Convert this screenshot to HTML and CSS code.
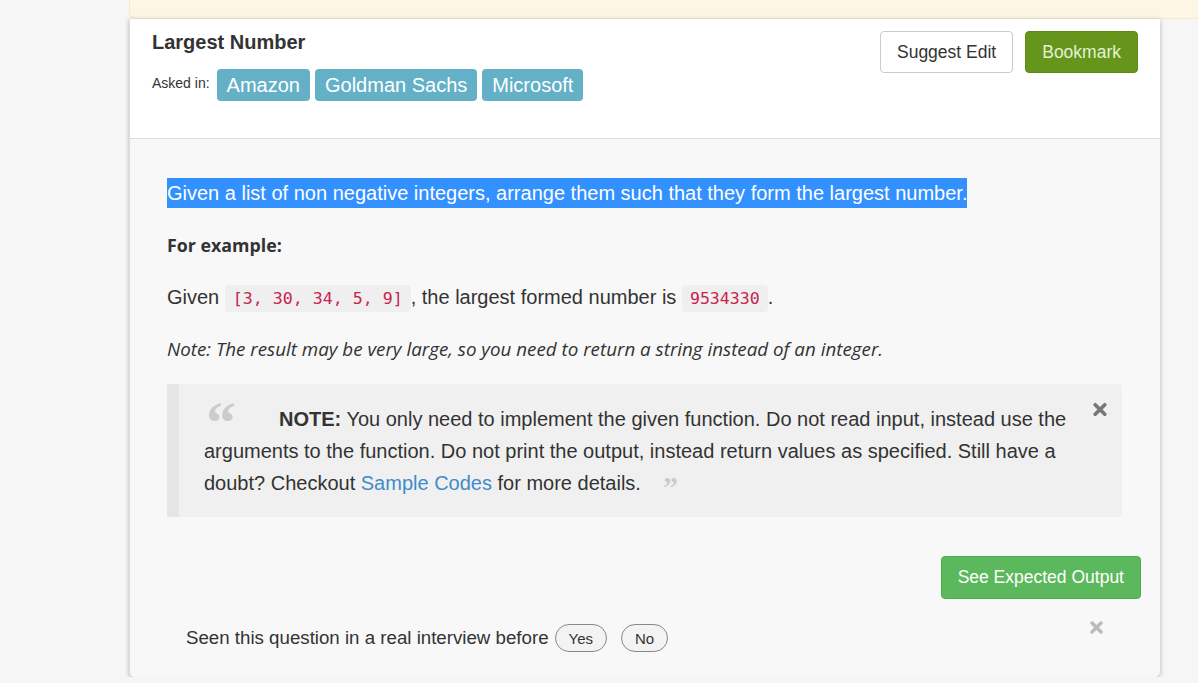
FILE: index.html
```html
<!DOCTYPE html>
<html lang="en">
<head>
<meta charset="utf-8">
<title>Largest Number</title>
<link rel="stylesheet" href="styles.css">
</head>
<body>
<div class="page">
  <div class="notice"></div>
  <div class="card">
    <div class="card-header">
      <div class="head-left">
        <h1 class="title">Largest Number</h1>
        <div class="asked">
          <span class="asked-label">Asked in:</span>
          <span class="tag">Amazon</span>
          <span class="tag">Goldman Sachs</span>
          <span class="tag">Microsoft</span>
        </div>
      </div>
      <div class="head-actions">
        <button class="btn btn-outline">Suggest Edit</button>
        <button class="btn btn-bookmark">Bookmark</button>
      </div>
    </div>
    <div class="card-body">
      <p class="para"><span class="selected">Given a list of non negative integers, arrange them such that they form the largest number.</span></p>
      <p class="para alt"><strong>For example:</strong></p>
      <p class="para">Given <code class="code">[3, 30, 34, 5, 9]</code>, the largest formed number is <code class="code">9534330</code>.</p>
      <p class="para alt italic"><em>Note: The result may be very large, so you need to return a string instead of an integer.</em></p>
      <blockquote class="note">
        <p class="note-text"><strong>NOTE:</strong> You only need to implement the given function. Do not read input, instead use the arguments to the function. Do not print the output, instead return values as specified. Still have a doubt? Checkout <a class="link" href="#">Sample Codes</a> for more details.</p>
        <span class="note-close"><svg width="14" height="13" viewBox="0 0 14 13"><path d="M2.2 1.7 L11.8 11.3 M11.8 1.7 L2.2 11.3" stroke="#777" stroke-width="3.6" stroke-linecap="round"/></svg></span>
      </blockquote>
      <div class="actions">
        <button class="btn btn-success">See Expected Output</button>
      </div>
      <div class="seen">
        <span class="seen-text">Seen this question in a real interview before</span>
        <button class="pill">Yes</button>
        <button class="pill">No</button>
        <span class="seen-close"><svg width="13" height="13" viewBox="0 0 13 13"><path d="M2 2 L11 11 M11 2 L2 11" stroke="#bbb" stroke-width="3.4" stroke-linecap="round"/></svg></span>
      </div>
    </div>
  </div>
</div>
</body>
</html>
```
FILE: styles.css
```css
* { box-sizing: border-box; }
html, body { margin: 0; padding: 0; }
body {
  background: #f6f6f6;
  font-family: "Liberation Sans", Arial, sans-serif;
  color: #333;
  overflow: hidden;
}
.page {
  padding-left: 129px;
}
.notice {
  height: 19px;
  background: #fdf6e3;
  border-bottom: 1px solid #f3ead2;
  border-left: 1px solid #f3ead2;
  border-bottom-left-radius: 6px;
}
.card {
  width: 1031px;
  background: #f8f8f8;
  border-radius: 0 0 5px 5px;
  box-shadow: 0 1px 5px rgba(0,0,0,0.28);
  border-left: 1px solid #ddd;
}
.card-header {
  background: #fff;
  display: flex;
  justify-content: space-between;
  padding: 12px 22px 37px 22px;
  border-bottom: 1px solid #ddd;
}
.title {
  margin: 0;
  font-size: 20px;
  line-height: 22px;
  font-weight: bold;
  color: #333;
}
.asked {
  display: flex;
  align-items: flex-start;
  margin-top: 16px;
}
.asked-label {
  font-size: 14px;
  line-height: 20px;
  margin-top: 4px;
  margin-right: 7px;
}
.tag {
  background: #63b0c7;
  color: #fff;
  font-size: 20px;
  line-height: 32px;
  height: 32px;
  padding: 0 10px;
  border-radius: 4px;
  margin-right: 5px;
}
.head-actions {
  display: flex;
  gap: 12px;
  margin-top: 0;
}
.btn {
  font-family: "Liberation Sans", Arial, sans-serif;
  font-size: 17.5px;
  height: 42px;
  padding: 0 16px;
  border-radius: 4px;
  cursor: pointer;
}
.btn-outline {
  background: #fff;
  border: 1px solid #ccc;
  color: #333;
}
.btn-bookmark {
  background: #65961b;
  border: 1px solid #5d8a18;
  color: #e4f1d3;
}
.card-body {
  padding: 39px 38px 25px 37px;
}
.para {
  margin: 0 0 22px 0;
  font-size: 20px;
  line-height: 30px;
}
.para.alt {
  font-family: "Open Sans", "Noto Sans", sans-serif;
  font-size: 17.8px;
}
.para.alt.italic {
  font-size: 18.8px;
  margin-bottom: 20px;
}
.para.alt strong { font-weight: 700; }
.selected {
  display: inline-block;
  background: #3390ff;
  color: #fff;
  line-height: 30px;
}
.code {
  font-family: "DejaVu Sans Mono", "Liberation Mono", monospace;
  font-size: 16.6px;
  line-height: 20px;
  color: #c7254e;
  background: #efefef;
  padding: 4px 8px;
  border-radius: 4px;
}
.note {
  position: relative;
  margin: 0;
  background: #f0f0f0;
  border-left: 12px solid #e6e6e6;
  border-radius: 0 4px 4px 0;
  padding: 19px 45px 18px 25px;
}
.note-text {
  margin: 0;
  font-size: 20px;
  line-height: 32px;
}
.note-text::before {
  content: "\201C";
  position: relative;
  top: 16.6px;
  font-family: "Liberation Serif", "Times New Roman", serif;
  font-weight: bold;
  font-size: 60px;
  line-height: 0;
  color: #cccccc;
  margin-left: 2px;
  margin-right: 43px;
}
.note-text::after {
  content: "\201D";
  position: relative;
  top: 7px;
  font-family: "Liberation Serif", "Times New Roman", serif;
  font-weight: bold;
  font-size: 30px;
  line-height: 0;
  color: #cccccc;
  margin-left: 22px;
}
.link {
  color: #428bca;
  text-decoration: none;
}
.note-close {
  position: absolute;
  top: 19px;
  right: 15px;
  width: 14px;
  height: 13px;
  display: block;
}
.note-close svg, .seen-close svg { display: block; }
.actions {
  display: flex;
  justify-content: flex-end;
  margin-top: 39px;
  margin-right: -19px;
}
.btn-success {
  background: #5cb85c;
  border: 1px solid #4cae4c;
  color: #fff;
  font-size: 17.5px;
  height: 43px;
  padding: 0 16px;
}
.seen {
  display: flex;
  align-items: center;
  margin-top: 25px;
  padding-left: 19px;
  height: 28px;
}
.seen-text {
  font-size: 18.7px;
  margin-right: 6px;
}
.pill {
  font-family: "Liberation Sans", Arial, sans-serif;
  font-size: 15px;
  color: #333;
  background: #f3f3f3;
  border: 1px solid #888;
  border-radius: 14px;
  height: 28px;
  padding: 0 13px;
  margin-right: 14px;
  cursor: pointer;
}
.seen-close {
  margin-left: auto;
  margin-right: 19px;
  align-self: flex-start;
  margin-top: -3px;
}
```
